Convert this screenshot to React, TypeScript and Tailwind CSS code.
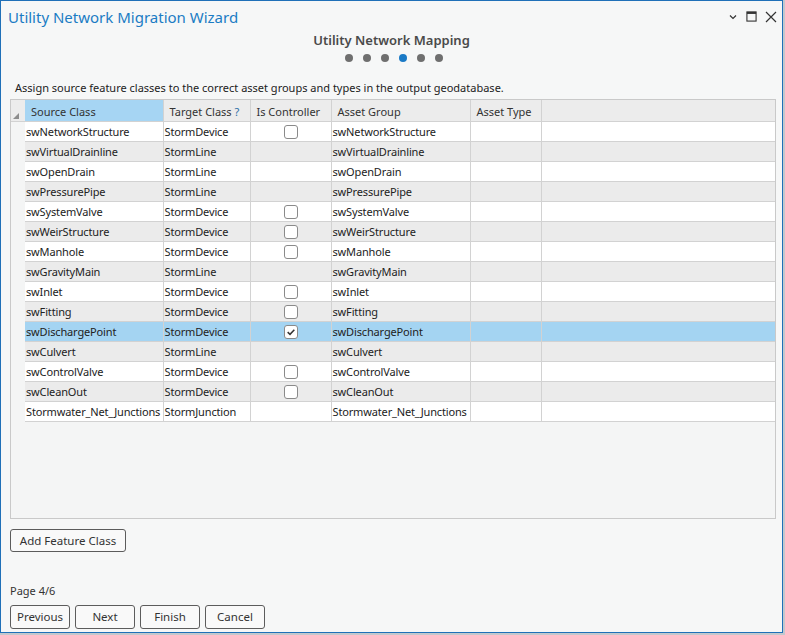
import React from "react";

type Row = {
  source: string;
  target: string;
  controller: "none" | "off" | "on";
  group: string;
};

const rows: Row[] = [
  { source: "swNetworkStructure", target: "StormDevice", controller: "off", group: "swNetworkStructure" },
  { source: "swVirtualDrainline", target: "StormLine", controller: "none", group: "swVirtualDrainline" },
  { source: "swOpenDrain", target: "StormLine", controller: "none", group: "swOpenDrain" },
  { source: "swPressurePipe", target: "StormLine", controller: "none", group: "swPressurePipe" },
  { source: "swSystemValve", target: "StormDevice", controller: "off", group: "swSystemValve" },
  { source: "swWeirStructure", target: "StormDevice", controller: "off", group: "swWeirStructure" },
  { source: "swManhole", target: "StormDevice", controller: "off", group: "swManhole" },
  { source: "swGravityMain", target: "StormLine", controller: "none", group: "swGravityMain" },
  { source: "swInlet", target: "StormDevice", controller: "off", group: "swInlet" },
  { source: "swFitting", target: "StormDevice", controller: "off", group: "swFitting" },
  { source: "swDischargePoint", target: "StormDevice", controller: "on", group: "swDischargePoint" },
  { source: "swCulvert", target: "StormLine", controller: "none", group: "swCulvert" },
  { source: "swControlValve", target: "StormDevice", controller: "off", group: "swControlValve" },
  { source: "swCleanOut", target: "StormDevice", controller: "off", group: "swCleanOut" },
  { source: "Stormwater_Net_Junctions", target: "StormJunction", controller: "none", group: "Stormwater_Net_Junctions" },
];

const SELECTED = 10;

function Checkbox({ checked }: { checked: boolean }) {
  return (
    <span className="mt-[1px] flex h-[14px] w-[14px] items-center justify-center rounded-[3px] border border-[#8a8a8a] bg-white">
      {checked && (
        <svg viewBox="0 0 12 12" className="h-[10px] w-[10px]" aria-hidden>
          <path d="M2 6.2 L4.8 8.8 L10 3.2" fill="none" stroke="#333" strokeWidth="1.8" />
        </svg>
      )}
    </span>
  );
}

function Button({ label, className }: { label: string; className: string }) {
  return (
    <button
      type="button"
      className={`flex items-center justify-center rounded-[3px] border border-[#5c5c5c] bg-[#f9f9f9] text-[11.5px] text-[#333] ${className}`}
    >
      {label}
    </button>
  );
}

export default function App() {
  return (
    <div
      className="h-[635px] w-[785px] bg-[#c3c8cd]"
      style={{ fontFamily: '"Noto Sans", "Open Sans", sans-serif' }}
    >
      <div className="flex h-[633px] w-[783px] flex-col border border-[#1f70b8] bg-[#f6f7f7]">
        {/* title bar */}
        <div className="flex h-[30px] items-center justify-between pl-[7px] pr-[5px] pt-[3px]">
          <span className="text-[15px] text-[#1b7cc4]">Utility Network Migration Wizard</span>
          <div className="mb-[2px] flex items-center gap-[8px] text-[#333]">
            <svg viewBox="0 0 10 10" className="h-[10px] w-[10px]" aria-hidden>
              <path d="M2 3.5 L5 6.5 L8 3.5" fill="none" stroke="#333" strokeWidth="1.2" />
            </svg>
            <svg viewBox="0 0 12 12" className="h-[11px] w-[11px]" aria-hidden>
              <rect x="1" y="1" width="10" height="10" fill="none" stroke="#333" strokeWidth="1.2" />
              <rect x="1" y="1" width="10" height="2.2" fill="#333" />
            </svg>
            <svg viewBox="0 0 12 12" className="h-[12px] w-[12px]" aria-hidden>
              <path d="M1 1 L11 11 M11 1 L1 11" fill="none" stroke="#333" strokeWidth="1.2" />
            </svg>
          </div>
        </div>

        <div className="-mt-[1px] text-center text-[13px] font-semibold leading-[20px] text-[#4a4a4a]">
          Utility Network Mapping
        </div>
        <div className="mt-[4px] flex justify-center gap-[10px] pl-[4px]">
          {[0, 1, 2, 3, 4, 5].map((i) => (
            <span
              key={i}
              className={`h-[8px] w-[8px] rounded-full ${i === 3 ? "bg-[#1a7ac6]" : "bg-[#6f6f6f]"}`}
            />
          ))}
        </div>

        <div className="mt-[18px] pl-[14px] text-[11px] leading-[16px] text-[#222]">
          Assign source feature classes to the correct asset groups and types in the output geodatabase.
        </div>

        {/* grid */}
        <div className="ml-[9px] mt-[3px] h-[420px] w-[766px] overflow-hidden border border-[#c9c9c9] bg-[#f4f5f5]">
          <table className="w-[764px] border-collapse text-[11px] text-[#222]" style={{ tableLayout: "fixed" }}>
            <colgroup>
              <col className="w-[14px]" />
              <col className="w-[138px]" />
              <col className="w-[87px]" />
              <col className="w-[81px]" />
              <col className="w-[139px]" />
              <col className="w-[71px]" />
              <col className="w-[234px]" />
            </colgroup>
            <thead>
              <tr className="h-[21px] text-[#333]">
                <th className="relative border-b border-[#d2d2d2] bg-[#ececec] p-0">
                  <span className="absolute bottom-[2px] left-[2px] h-0 w-0 border-b-[6px] border-l-[6px] border-b-[#8c8c8c] border-l-transparent" />
                </th>
                <th className="whitespace-nowrap border-b border-r border-[#d2d2d2] bg-[#a6d5f3] px-[6px] pb-0 pt-[3px] text-left font-normal">
                  Source Class
                </th>
                <th className="whitespace-nowrap border-b border-r border-[#d2d2d2] bg-[#ececec] px-[6px] pb-0 pt-[3px] text-left font-normal">
                  Target Class <span className="text-[#2c6ea6]">?</span>
                </th>
                <th className="whitespace-nowrap border-b border-r border-[#d2d2d2] bg-[#ececec] px-[6px] pb-0 pt-[3px] text-left font-normal">
                  Is Controller
                </th>
                <th className="whitespace-nowrap border-b border-r border-[#d2d2d2] bg-[#ececec] px-[6px] pb-0 pt-[3px] text-left font-normal">
                  Asset Group
                </th>
                <th className="whitespace-nowrap border-b border-r border-[#d2d2d2] bg-[#ececec] px-[6px] pb-0 pt-[3px] text-left font-normal">
                  Asset Type
                </th>
                <th className="border-b border-[#d2d2d2] bg-[#ececec] p-0" />
              </tr>
            </thead>
            <tbody>
              {rows.map((r, i) => {
                const bg = i === SELECTED ? "bg-[#a4d4f2]" : i % 2 === 0 ? "bg-white" : "bg-[#ebebeb]";
                const cell = `h-[20px] overflow-hidden whitespace-nowrap border-b border-r border-[#d2d2d2] px-[1px] py-0 leading-[19px] tracking-[-0.15px] ${bg}`;
                return (
                  <tr key={r.source}>
                    <td className="p-0" />
                    <td className={cell}>{r.source}</td>
                    <td className={cell}>{r.target}</td>
                    <td className={cell}>
                      {r.controller !== "none" && (
                        <div className="flex justify-center">
                          <Checkbox checked={r.controller === "on"} />
                        </div>
                      )}
                    </td>
                    <td className={cell}>{r.group}</td>
                    <td className={cell} />
                    <td className={`${cell} border-r-0`} />
                  </tr>
                );
              })}
            </tbody>
          </table>
        </div>

        <div className="ml-[9px] mt-[10px]">
          <Button label="Add Feature Class" className="h-[23px] w-[116px]" />
        </div>

        <div className="ml-[9px] mt-[31px] text-[11px] leading-[16px] text-[#333]">Page 4/6</div>

        <div className="ml-[9px] mt-[6px] flex gap-[5px]">
          <Button label="Previous" className="h-[24px] w-[60px]" />
          <Button label="Next" className="h-[24px] w-[60px]" />
          <Button label="Finish" className="h-[24px] w-[60px]" />
          <Button label="Cancel" className="h-[24px] w-[60px]" />
        </div>
      </div>
    </div>
  );
}
